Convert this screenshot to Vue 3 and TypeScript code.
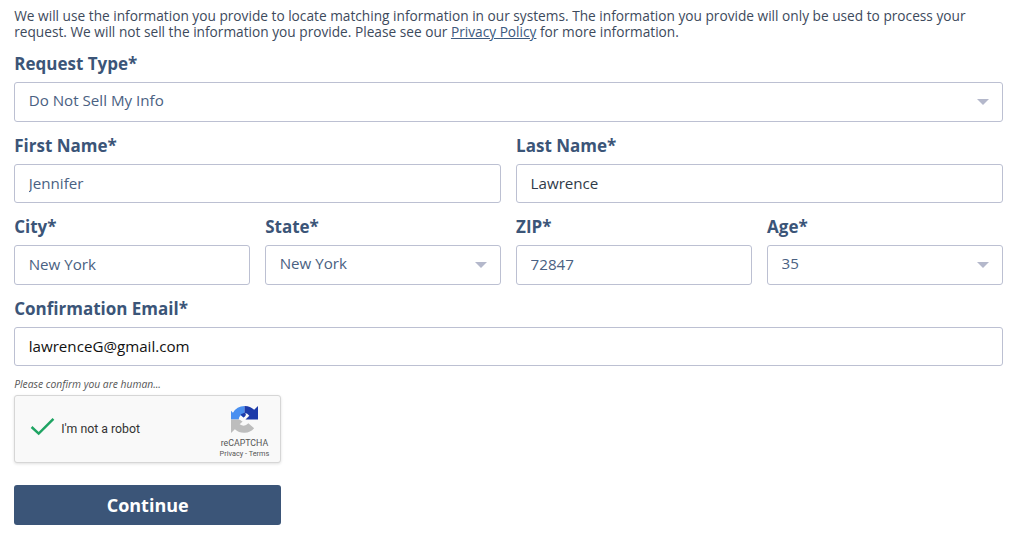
<script setup lang="ts">
import { ref } from 'vue'

const requestType = ref('Do Not Sell My Info')
const firstName = ref('Jennifer')
const lastName = ref('Lawrence')
const city = ref('New York')
const state = ref('New York')
const zip = ref('72847')
const age = ref('35')
const email = ref('lawrenceG@gmail.com')
</script>

<template>
  <form class="page" @submit.prevent>
    <p class="intro">
      We will use the information you provide to locate matching information in our systems. The information you provide will only be used to process your request. We will not sell the information you provide. Please see our <a href="#">Privacy Policy</a> for more information.
    </p>

    <div class="grid">
      <div class="field full">
        <label>Request Type*</label>
        <div class="select-wrap">
          <select v-model="requestType" class="control muted">
            <option>Do Not Sell My Info</option>
          </select>
        </div>
      </div>

      <div class="field half">
        <label>First Name*</label>
        <input v-model="firstName" class="control muted" />
      </div>
      <div class="field half">
        <label>Last Name*</label>
        <input v-model="lastName" class="control dark" />
      </div>

      <div class="field">
        <label>City*</label>
        <input v-model="city" class="control muted" />
      </div>
      <div class="field">
        <label>State*</label>
        <div class="select-wrap">
          <select v-model="state" class="control muted">
            <option>New York</option>
          </select>
        </div>
      </div>
      <div class="field">
        <label>ZIP*</label>
        <input v-model="zip" class="control muted" />
      </div>
      <div class="field">
        <label>Age*</label>
        <div class="select-wrap">
          <select v-model="age" class="control muted">
            <option>35</option>
          </select>
        </div>
      </div>

      <div class="field full">
        <label>Confirmation Email*</label>
        <input v-model="email" class="control black" />
      </div>
    </div>

    <p class="human">Please confirm you are human...</p>

    <div class="captcha">
      <svg class="check" viewBox="0 0 26 20" width="25" height="19" aria-hidden="true">
        <path d="M1.5 10.5 L9 17.5 L24.5 2" fill="none" stroke="#1fa463" stroke-width="2.6" />
      </svg>
      <span class="robot">I'm not a robot</span>
      <div class="brand">
        <svg viewBox="0 0 28 28" width="27" height="27" aria-hidden="true">
          <path d="M14 0 A14 14 0 0 0 2 7 L0 5 L0 14 L8 14 A6 6 0 0 1 10 9.5 L13 12 C15 10 14 8 14 7 Z" fill="#4a90f0" />
          <path d="M14 0 A14 14 0 0 1 24 4 L28 0 L28 14 L15 14 L19 10 A7 7 0 0 0 14 7 C16 8 16 10 13 12 L10 9 C11 8 12 8 14 7 Z" fill="#1c3aa9" />
          <path d="M0 14 L0 28 L4 24 A14 14 0 0 0 24 23 L18 18 A7 7 0 0 1 9 19 L12 16 C10 15 9 14 8 14 Z" fill="#bdbdbd" />
        </svg>
        <span class="brand-name">reCAPTCHA</span>
        <span class="brand-links">Privacy - Terms</span>
      </div>
    </div>

    <button class="continue" type="submit">Continue</button>
  </form>
</template>

<style>
html, body {
  margin: 0;
  background: #fff;
}
</style>

<style scoped>
.page {
  box-sizing: border-box;
  width: 1024px;
  height: 539px;
  padding: 8px 21px 0 14.2px;
  font-family: "Open Sans", "Liberation Sans", sans-serif;
  overflow: hidden;
}
.intro {
  margin: 0;
  font-size: 13.7px;
  line-height: 16px;
  color: #3d4a5c;
}
.intro a {
  color: #3c5a80;
}
.grid {
  display: grid;
  grid-template-columns: repeat(4, 1fr);
  column-gap: 15px;
  row-gap: 12px;
  margin-top: 12px;
}
.field {
  display: flex;
  flex-direction: column;
  min-width: 0;
}
.full {
  grid-column: span 4;
}
.half {
  grid-column: span 2;
}
label {
  font-size: 17px;
  line-height: 22px;
  font-weight: 700;
  color: #3b5578;
  padding-top: 1px;
  margin-bottom: 7px;
}
.control {
  box-sizing: border-box;
  width: 100%;
  height: 39.5px;
  padding: 0 13.5px 1px;
  border: 1px solid #bcc0d2;
  border-radius: 3px;
  background: #fff;
  font-family: inherit;
  font-size: 15.15px;
  outline: none;
  appearance: none;
  -webkit-appearance: none;
}
select.control {
  padding-bottom: 3px;
}
.muted {
  color: #4a6182;
}
.dark {
  color: #2f3a48;
}
.black {
  color: #111;
}
.select-wrap {
  position: relative;
}
.select-wrap::after {
  content: "";
  position: absolute;
  right: 14px;
  top: 17px;
  border-left: 6px solid transparent;
  border-right: 6px solid transparent;
  border-top: 6px solid #b4b8cb;
  pointer-events: none;
}
.human {
  margin: 11px 0 0;
  font-size: 10.3px;
  line-height: 14px;
  font-style: italic;
  color: #555;
}
.captcha {
  box-sizing: border-box;
  display: flex;
  align-items: center;
  width: 267px;
  height: 68px;
  margin-top: 4px;
  padding: 0 11px 0 15px;
  background: #f9f9f9;
  border: 1px solid #d6d6d6;
  border-radius: 3px;
  box-shadow: 0 1px 3px rgba(0, 0, 0, 0.12);
}
.check {
  margin-top: -6px;
  flex: none;
}
.robot {
  margin-left: 6px;
  font-family: Roboto, "Liberation Sans", sans-serif;
  font-size: 12.3px;
  color: #333;
}
.brand {
  margin-left: auto;
  margin-top: 6px;
  display: flex;
  flex-direction: column;
  align-items: center;
  font-family: Roboto, "Liberation Sans", sans-serif;
  color: #555;
}
.brand-name {
  margin-top: 5px;
  font-size: 8.8px;
  line-height: 11px;
}
.brand-links {
  font-size: 7.3px;
  line-height: 10px;
}
.continue {
  display: block;
  width: 267px;
  height: 40px;
  margin-top: 22px;
  border: 0;
  border-radius: 3px;
  background: #3b5578;
  color: #fff;
  font-family: inherit;
  font-size: 18px;
  font-weight: 700;
}
</style>
